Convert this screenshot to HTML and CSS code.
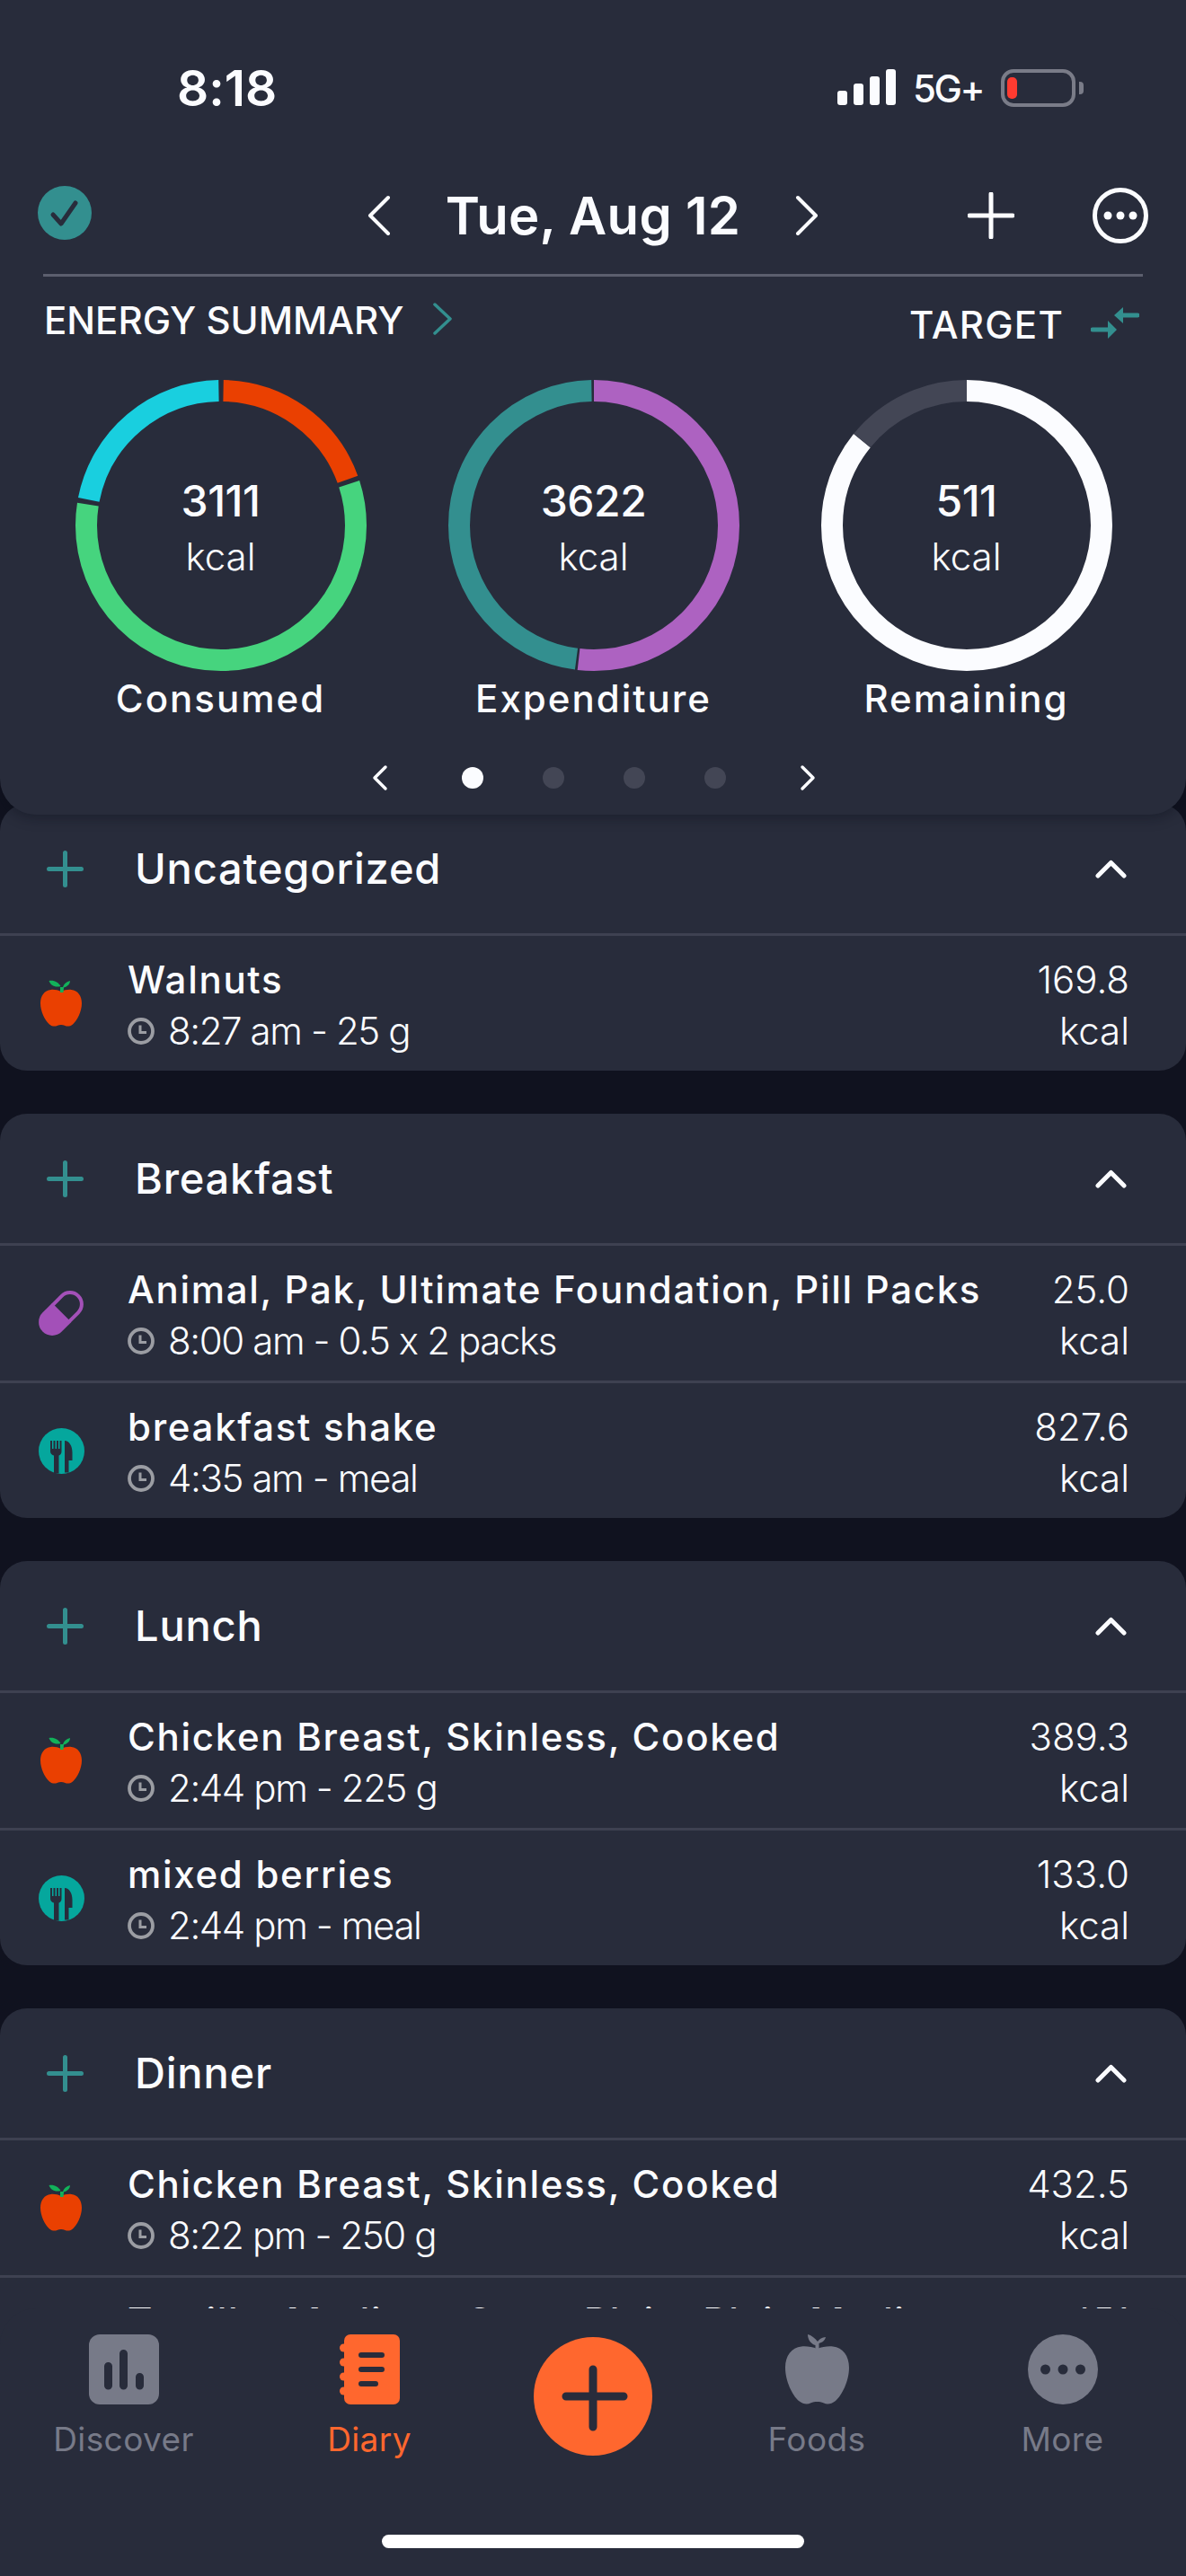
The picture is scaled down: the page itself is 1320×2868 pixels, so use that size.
FILE: index.html
```html
<!DOCTYPE html>
<html lang="en">
<head>
  <meta charset="UTF-8" />
  <meta name="viewport" content="width=device-width, initial-scale=1.0" />
  <title>Diary</title>
  <link rel="stylesheet" href="styles.css">
</head>
<body>
  <svg class="defs" width="0" height="0">
    <symbol id="apple" viewBox="0 0 46 52">
      <path d="M23 13C19.500 11.500 15.500 10.500 11.500 11C4.500 11.500 0 18 0 26C0 35 5 45 10 49.500C13 52 16.500 52 18.500 51C20 50.300 21.500 50 23 50C24.500 50 26 50.300 27.500 51C29.500 52 33 52 36 49.500C41 45 46 35 46 26C46 18 41.500 11.500 34.500 11C30.500 10.500 26.500 11.500 23 13Z"/>
      <path class="leaf" d="M22.500 7C20 2.500 15 0 9.500 1C11 5.500 16 9 22.500 7ZM25 8C26 4.500 29 2 33 1C33 4.500 30 7.500 26 8.500L25.500 14H22L22 8Z"/>
    </symbol>
    <symbol id="clock" viewBox="0 0 30 30">
      <circle cx="15" cy="15" r="13" fill="none" stroke="#9b9da3" stroke-width="3.800"/>
      <path d="M14 8.500V16.500H21" fill="none" stroke="#9b9da3" stroke-width="3"/>
    </symbol>
    <symbol id="plus" viewBox="0 0 41 41">
      <path d="M20.500 2.500V38.500M2.500 20.500H38.500" fill="none" stroke="#338f8f" stroke-width="5" stroke-linecap="round"/>
    </symbol>
    <symbol id="up" viewBox="0 0 35 21">
      <path d="M3 18L17.500 3.500L32 18" fill="none" stroke="#fbfcff" stroke-width="5" stroke-linecap="round" stroke-linejoin="round"/>
    </symbol>
    <symbol id="meal" viewBox="0 0 51 51">
      <circle cx="25.500" cy="25.500" r="25.500" fill="#05a79d"/>
      <path fill="#282c3b" d="M13 14H15V23H16.500V14H18.500V23H20V14H22V23H23.500V14H25.500V26C25.500 28.500 24 30 22.500 30.500V50.500H17V30.500C15 30 13 28.500 13 26ZM29 14C34 14 37.500 20 37.500 27V36H33.500V49.500H29Z"/>
    </symbol>
  </svg>

  <div class="screen">
    <header class="summary">
      <div class="status">
        <span class="clock-time">8:18</span>
        <div class="status-right">
          <div class="signal"><i class="b1"></i><i class="b2"></i><i class="b3"></i><i class="b4"></i></div>
          <span class="net">5G+</span>
          <div class="battery"><div class="battery-body"><i></i></div><div class="battery-nub"></div></div>
        </div>
      </div>

      <div class="date-row">
        <svg class="check" viewBox="0 0 60 60"><circle cx="30" cy="30" r="30" fill="#338f8f"/><path d="M17 32L26 42L42 19" fill="none" stroke="#282c3b" stroke-width="5" stroke-linecap="round" stroke-linejoin="round"/></svg>
        <div class="date-nav">
          <svg class="chev" viewBox="0 0 27 46"><path d="M24 3L4 23L24 43" fill="none" stroke="#fbfcff" stroke-width="4" stroke-linecap="round" stroke-linejoin="round"/></svg>
          <span class="date">Tue, Aug 12</span>
          <svg class="chev" viewBox="0 0 27 46"><path d="M3 3L23 23L3 43" fill="none" stroke="#fbfcff" stroke-width="4" stroke-linecap="round" stroke-linejoin="round"/></svg>
        </div>
        <svg class="add" viewBox="0 0 52 52"><path d="M26 2V50M2 26H50" fill="none" stroke="#fbfcff" stroke-width="5" stroke-linecap="round"/></svg>
        <svg class="menu" viewBox="0 0 62 62"><circle cx="31" cy="31" r="28.500" fill="none" stroke="#fbfcff" stroke-width="5"/><circle cx="17" cy="31" r="4.500" fill="#fbfcff"/><circle cx="31" cy="31" r="4.500" fill="#fbfcff"/><circle cx="45" cy="31" r="4.500" fill="#fbfcff"/></svg>
      </div>
      <div class="rule"></div>

      <div class="energy-head">
        <div class="energy-title">
          <span>ENERGY SUMMARY</span>
          <svg class="teal-chev" viewBox="0 0 22 36"><path d="M2 2L19 18L2 34" fill="none" stroke="#338f8f" stroke-width="3.500" stroke-linecap="round" stroke-linejoin="round"/></svg>
        </div>
        <div class="energy-target">
          <span>TARGET</span>
          <svg class="swap" viewBox="0 0 54 38"><path d="M52 10H34M2 26H20" fill="none" stroke="#338f8f" stroke-width="5" stroke-linecap="round"/><path d="M26 10L36 1V19ZM29 26L19 16V36Z" fill="#338f8f"/></svg>
        </div>
      </div>

      <div class="rings">
        <div class="ring-col">
          <div class="ring">
            <svg viewBox="0 0 324 324">
              <circle class="arc arc-red" cx="162" cy="162" r="150" pathLength="360" stroke-dasharray="69 291" stroke-dashoffset="-1"/>
              <circle class="arc arc-green" cx="162" cy="162" r="150" pathLength="360" stroke-dasharray="207 153" stroke-dashoffset="-72"/>
              <circle class="arc arc-cyan" cx="162" cy="162" r="150" pathLength="360" stroke-dasharray="78 282" stroke-dashoffset="-281"/>
            </svg>
            <div class="ring-text"><strong>3111</strong><span>kcal</span></div>
          </div>
          <div class="ring-label">Consumed</div>
        </div>
        <div class="ring-col">
          <div class="ring">
            <svg viewBox="0 0 324 324">
              <circle class="arc arc-purple" cx="162" cy="162" r="150" pathLength="360" stroke-dasharray="186.500 173.500" stroke-dashoffset="0"/>
              <circle class="arc arc-teal" cx="162" cy="162" r="150" pathLength="360" stroke-dasharray="171.500 188.500" stroke-dashoffset="-187.500"/>
            </svg>
            <div class="ring-text"><strong>3622</strong><span>kcal</span></div>
          </div>
          <div class="ring-label">Expenditure</div>
        </div>
        <div class="ring-col">
          <div class="ring">
            <svg viewBox="0 0 324 324">
              <circle class="arc arc-white" cx="162" cy="162" r="150" pathLength="360" stroke-dasharray="309 51" stroke-dashoffset="0"/>
              <circle class="arc arc-grey" cx="162" cy="162" r="150" pathLength="360" stroke-dasharray="51 309" stroke-dashoffset="-309"/>
            </svg>
            <div class="ring-text"><strong>511</strong><span>kcal</span></div>
          </div>
          <div class="ring-label">Remaining</div>
        </div>
      </div>

      <div class="pager">
        <svg class="pager-chev" viewBox="0 0 18 30"><path d="M15 3L3 15L15 27" fill="none" stroke="#fbfcff" stroke-width="3.500" stroke-linecap="round" stroke-linejoin="round"/></svg>
        <div class="dots"><i class="on"></i><i></i><i></i><i></i></div>
        <svg class="pager-chev" viewBox="0 0 18 30"><path d="M3 3L15 15L3 27" fill="none" stroke="#fbfcff" stroke-width="3.500" stroke-linecap="round" stroke-linejoin="round"/></svg>
      </div>
    </header>

    <main class="diary">
      <section class="meal first">
        <div class="meal-head">
          <svg class="meal-add"><use href="#plus"/></svg>
          <h2>Uncategorized</h2>
          <svg class="meal-toggle"><use href="#up"/></svg>
        </div>
        <div class="entry">
          <div class="entry-icon"><svg class="apple"><use href="#apple"/></svg></div>
          <div class="entry-text">
            <div class="entry-name">Walnuts</div>
            <div class="entry-meta"><svg class="clock"><use href="#clock"/></svg>8:27 am - 25 g</div>
          </div>
          <div class="entry-kcal">169.8<br>kcal</div>
        </div>
      </section>

      <section class="meal">
        <div class="meal-head">
          <svg class="meal-add"><use href="#plus"/></svg>
          <h2>Breakfast</h2>
          <svg class="meal-toggle"><use href="#up"/></svg>
        </div>
        <div class="entry">
          <div class="entry-icon">
            <svg class="pill" viewBox="0 0 50 50"><g transform="translate(25 25) rotate(-45)"><path fill="#a350b8" d="M1 -15H-14A15 15 0 0 0 -14 15H1Z"/><path fill="none" stroke="#a350b8" stroke-width="4" d="M0 -13H14A13 13 0 0 1 14 13H0"/></g></svg>
          </div>
          <div class="entry-text">
            <div class="entry-name">Animal, Pak, Ultimate Foundation, Pill Packs</div>
            <div class="entry-meta"><svg class="clock"><use href="#clock"/></svg>8:00 am - 0.5 x 2 packs</div>
          </div>
          <div class="entry-kcal">25.0<br>kcal</div>
        </div>
        <div class="entry">
          <div class="entry-icon"><svg class="meal-icon"><use href="#meal"/></svg></div>
          <div class="entry-text">
            <div class="entry-name">breakfast shake</div>
            <div class="entry-meta"><svg class="clock"><use href="#clock"/></svg>4:35 am - meal</div>
          </div>
          <div class="entry-kcal">827.6<br>kcal</div>
        </div>
      </section>

      <section class="meal">
        <div class="meal-head">
          <svg class="meal-add"><use href="#plus"/></svg>
          <h2>Lunch</h2>
          <svg class="meal-toggle"><use href="#up"/></svg>
        </div>
        <div class="entry">
          <div class="entry-icon"><svg class="apple"><use href="#apple"/></svg></div>
          <div class="entry-text">
            <div class="entry-name">Chicken Breast, Skinless, Cooked</div>
            <div class="entry-meta"><svg class="clock"><use href="#clock"/></svg>2:44 pm - 225 g</div>
          </div>
          <div class="entry-kcal">389.3<br>kcal</div>
        </div>
        <div class="entry">
          <div class="entry-icon"><svg class="meal-icon"><use href="#meal"/></svg></div>
          <div class="entry-text">
            <div class="entry-name">mixed berries</div>
            <div class="entry-meta"><svg class="clock"><use href="#clock"/></svg>2:44 pm - meal</div>
          </div>
          <div class="entry-kcal">133.0<br>kcal</div>
        </div>
      </section>

      <section class="meal">
        <div class="meal-head">
          <svg class="meal-add"><use href="#plus"/></svg>
          <h2>Dinner</h2>
          <svg class="meal-toggle"><use href="#up"/></svg>
        </div>
        <div class="entry">
          <div class="entry-icon"><svg class="apple"><use href="#apple"/></svg></div>
          <div class="entry-text">
            <div class="entry-name">Chicken Breast, Skinless, Cooked</div>
            <div class="entry-meta"><svg class="clock"><use href="#clock"/></svg>8:22 pm - 250 g</div>
          </div>
          <div class="entry-kcal">432.5<br>kcal</div>
        </div>
        <div class="entry">
          <div class="entry-icon"></div>
          <div class="entry-text">
            <div class="entry-name">Tortilla, Medium, Corn, Plain, Plain Medium</div>
            <div class="entry-meta"></div>
          </div>
          <div class="entry-kcal">451<br>kcal</div>
        </div>
      </section>
    </main>

    <nav class="tabbar">
      <div class="tabs">
        <div class="tab">
          <svg class="tab-icon" width="78" height="78" viewBox="0 0 78 78"><rect width="78" height="78" rx="12" fill="#777a88"/><path d="M21.500 35.500V57M38.500 21.500V57M56.500 47.500V57" fill="none" stroke="#282c3b" stroke-width="9" stroke-linecap="round"/></svg>
          <span>Discover</span>
        </div>
        <div class="tab tab-active">
          <svg class="tab-icon" width="67" height="78" viewBox="0 0 67 78"><rect x="5" width="62" height="78" rx="7" fill="#ff672e"/><circle cx="4.500" cy="15" r="4.500" fill="#ff672e"/><circle cx="4.500" cy="31" r="4.500" fill="#ff672e"/><circle cx="4.500" cy="47" r="4.500" fill="#ff672e"/><circle cx="4.500" cy="63" r="4.500" fill="#ff672e"/><path d="M24 23H47M24 39H47M24 55H40" fill="none" stroke="#282c3b" stroke-width="6" stroke-linecap="round"/></svg>
          <span>Diary</span>
        </div>
        <div class="tab tab-add">
          <svg width="132" height="132" viewBox="0 0 132 132"><circle cx="66" cy="66" r="66" fill="#ff672e"/><path d="M66 36V100M36 66H100" fill="none" stroke="#282c3b" stroke-width="9" stroke-linecap="round"/></svg>
        </div>
        <div class="tab">
          <svg class="tab-icon" width="71" height="78" viewBox="0 0 71 78"><path fill="#777a88" d="M35.500 16C30 14 24 13 18 13.500C7 14.500 0 24 0 37C0 52 8 68 15 74C20 78 25 78 28 76.500C31 75 33 75 35.500 75C38 75 40 75 43 76.500C46 78 51 78 56 74C63 68 71 52 71 37C71 24 64 14.500 53 13.500C47 13 41 14 35.500 16Z"/><path fill="#777a88" d="M25 0C25 6 29 11 33.500 12L33.500 17H37.500V10C41 9 44 7 45 3C41 3.500 38 5 36 8C33 4 29 1 25 0Z"/></svg>
          <span>Foods</span>
        </div>
        <div class="tab">
          <svg class="tab-icon" width="78" height="78" viewBox="0 0 78 78"><circle cx="39" cy="39" r="39" fill="#777a88"/><circle cx="19.500" cy="39" r="5.500" fill="#282c3b"/><circle cx="39" cy="39" r="5.500" fill="#282c3b"/><circle cx="58.500" cy="39" r="5.500" fill="#282c3b"/></svg>
          <span>More</span>
        </div>
      </div>
      <div class="home-bar"></div>
    </nav>
  </div>
</body>
</html>
```

FILE: styles.css
```css
* { box-sizing: border-box; }
body { margin: 0; background: #10121f; color: #fbfcff; font-family: Inter, "Noto Sans", sans-serif; font-feature-settings: "calt" 0; }
.defs { display: block; height: 0; }
svg { display: block; flex: none; }

.screen { width: 1320px; height: 2868px; position: relative; overflow: hidden; background: #10121f; }

/* top card */
.summary {
  height: 907px; position: relative; z-index: 1;
  background: #282c3b; border-radius: 0 0 40px 40px;
  box-shadow: 0 4px 14px rgba(10,12,24,0.35);
}
.status { height: 180px; display: flex; align-items: flex-start; justify-content: space-between; padding: 69px 0 0 197px; }
.clock-time { font-size: 55px; line-height: 58px; font-weight: 600; }
.status-right { display: flex; align-items: flex-end; margin: 8px 114px 0 0; }
.signal { display: flex; align-items: flex-end; gap: 7px; height: 40px; margin-bottom: 2px; }
.signal i { width: 11px; background: #fbfcff; border-radius: 3px; }
.signal .b1 { height: 16px; }
.signal .b2 { height: 24px; }
.signal .b3 { height: 32px; }
.signal .b4 { height: 40px; }
.net { font-size: 42px; line-height: 42px; font-weight: 500; letter-spacing: -2.5px; margin: 0 20px 0 19px; position: relative; top: 1px; }
.battery { display: flex; align-items: center; }
.battery-body { width: 83px; height: 42px; border: 4px solid #7a7c88; border-radius: 14px; padding: 5px 3px; }
.battery-body i { display: block; width: 11px; height: 24px; background: #ff3b30; border-radius: 5px; }
.battery-nub { width: 5px; height: 14px; margin-left: 4px; background: #7a7c88; border-radius: 0 4px 4px 0; }

.date-row { height: 120px; display: flex; align-items: center; padding-left: 42px; }
.check { width: 60px; height: 60px; margin-top: -6px; }
.date-nav { width: 504px; margin-left: 306px; display: flex; align-items: center; justify-content: space-between; }
.chev { width: 27px; height: 46px; }
.date { font-size: 58px; line-height: 70px; font-weight: 600; letter-spacing: 0.3px; }
.add { width: 52px; height: 52px; margin-left: 165px; }
.menu { width: 62px; height: 62px; margin-left: 87px; }
.rule { height: 3px; margin: 5px 48px 0; background: #5c5f6e; }

.energy-head { height: 115px; display: flex; justify-content: space-between; padding: 26px 52px 0 49px; }
.energy-title { display: flex; align-items: flex-start; height: 46px; }
.energy-title span { font-size: 42px; line-height: 46px; font-weight: 500; }
.teal-chev { width: 22px; height: 36px; margin: 3px 0 0 33px; }
.energy-target { display: flex; align-items: flex-start; margin-top: 5px; }
.energy-target span { font-size: 42px; line-height: 46px; font-weight: 500; letter-spacing: 1.2px; }
.swap { width: 54px; height: 38px; margin: 2px 0 0 30px; }

.rings { display: grid; grid-template-columns: repeat(3, 415px); padding-left: 38px; }
.ring-col { display: flex; flex-direction: column; align-items: center; }
.ring { width: 324px; height: 324px; display: grid; }
.ring svg, .ring-text { grid-area: 1 / 1; }
.arc { fill: none; stroke-width: 24; transform: rotate(-90deg); transform-origin: 162px 162px; }
.arc-red { stroke: #ea4001; }
.arc-green { stroke: #46d47e; }
.arc-cyan { stroke: #19cfdf; }
.arc-purple { stroke: #ad62c1; }
.arc-teal { stroke: #338f8f; }
.arc-white { stroke: #fbfcff; }
.arc-grey { stroke: #434655; }
.ring-text { display: flex; flex-direction: column; align-items: center; padding-top: 106px; }
.ring-text strong { font-size: 48px; line-height: 58px; font-weight: 500; letter-spacing: -0.5px; }
.ring-text span { font-size: 42px; line-height: 50px; font-weight: 300; margin-top: 8px; }
.ring-label { font-size: 42px; line-height: 50px; font-weight: 500; letter-spacing: 2px; margin-top: 6px; }

.pager { display: flex; align-items: center; margin: 48px 0 0 414px; }
.pager-chev { width: 18px; height: 30px; }
.dots { display: flex; gap: 66px; margin: 0 82px 0 82px; }
.dots i { width: 24px; height: 24px; border-radius: 50%; background: #434655; }
.dots .on { background: #fbfcff; }

/* diary list */
.diary { display: flex; flex-direction: column; gap: 48px; margin-top: -12px; }
.meal { background: #282c3b; border-radius: 30px; }
.meal-head { height: 147px; display: flex; align-items: center; padding: 0 66px 0 52px; border-bottom: 3px solid #3e4151; }
.meal-add { width: 41px; height: 41px; }
.meal h2 { flex: 1; margin: 0 0 0 57px; font-size: 47px; line-height: 56px; font-weight: 500; letter-spacing: 0.8px; }
.meal-toggle { width: 35px; height: 21px; }

.entry { height: 153px; display: flex; align-items: center; padding: 0 63px 0 42px; border-bottom: 3px solid #3e4151; }
.entry:last-child { height: 150px; border-bottom: 0; }
.entry-icon { width: 52px; height: 52px; display: flex; justify-content: center; align-items: center; margin-right: 48px; }
.apple { width: 46px; height: 52px; color: #ea4001; fill: currentColor; --leaf: #12b15a; }
.leaf { fill: var(--leaf); }
.pill { width: 50px; height: 50px; }
.meal-icon { width: 51px; height: 51px; }
.entry-text { flex: 1; min-width: 0; padding-top: 5px; }
.entry-name { font-size: 42px; line-height: 54px; font-weight: 500; letter-spacing: 1.7px; white-space: nowrap; }
.entry-meta { display: flex; align-items: center; min-height: 56px; margin-top: 2px; font-size: 42px; line-height: 56px; font-weight: 300; letter-spacing: -1.4px; white-space: nowrap; }
.clock { width: 30px; height: 30px; margin-right: 15px; }
.entry-kcal { padding-top: 3px; font-size: 42px; line-height: 57px; font-weight: 300; text-align: right; }

/* bottom bar sits over the list */
.tabbar {
  position: absolute; left: 0; right: 0; bottom: 0; height: 298px; z-index: 2;
  background: #282c3b; border-radius: 40px 40px 0 0;
}
.tabs { display: grid; grid-template-columns: 275px 272px 226px 272px 275px; padding-top: 29px; }
.tab { display: flex; flex-direction: column; align-items: center; color: #777a88; }
.tab span { font-size: 37px; line-height: 44px; font-weight: 400; letter-spacing: 0.4px; margin-top: 17px; }
.tab-icon { height: 78px; }
.tab-active { color: #ff672e; }
.tab-add { padding-top: 3px; }
.home-bar { width: 470px; height: 15px; margin: 84px auto 0; background: #fff; border-radius: 8px; }
```
